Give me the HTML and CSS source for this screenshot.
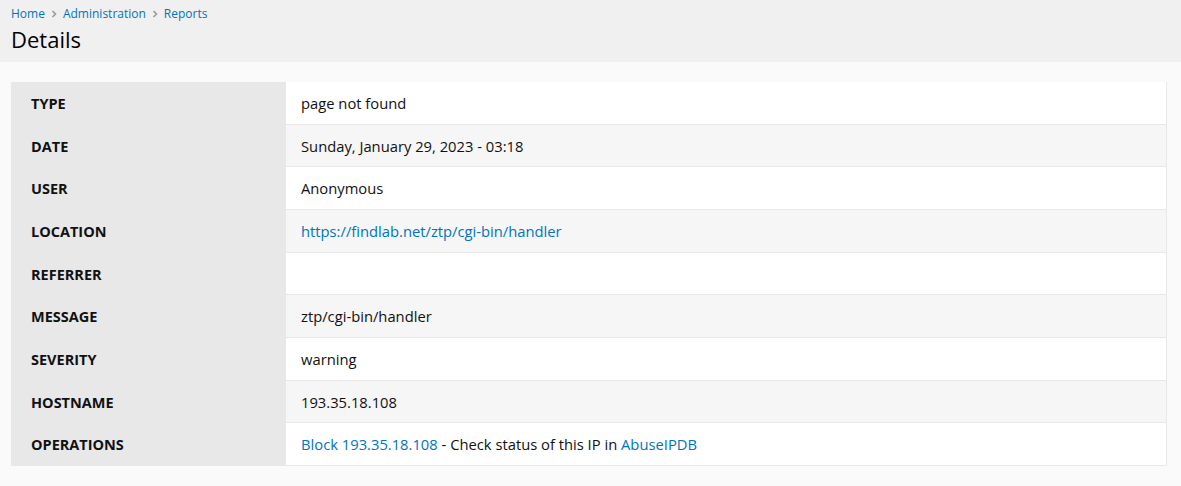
FILE: index.html
```html
<!DOCTYPE html>
<html>
<head>
<meta charset="utf-8">
<link rel="stylesheet" href="styles.css">
</head>
<body>
<header class="page-header">
  <nav class="breadcrumb">
    <a href="#">Home</a>
    <svg class="sep" viewBox="0 0 6 8" width="6" height="8"><path d="M1.5 1l3 3-3 3" fill="none" stroke="#999" stroke-width="1.6"/></svg>
    <a href="#">Administration</a>
    <svg class="sep" viewBox="0 0 6 8" width="6" height="8"><path d="M1.5 1l3 3-3 3" fill="none" stroke="#999" stroke-width="1.6"/></svg>
    <a href="#">Reports</a>
  </nav>
  <h1 class="title">Details</h1>
</header>
<main class="content">
  <table class="details">
    <tbody>
      <tr><th>Type</th><td>page not found</td></tr>
      <tr><th>Date</th><td>Sunday, January 29, 2023 - 03:18</td></tr>
      <tr><th>User</th><td>Anonymous</td></tr>
      <tr><th>Location</th><td><a href="#">https://findlab.net/ztp/cgi-bin/handler</a></td></tr>
      <tr><th>Referrer</th><td></td></tr>
      <tr><th>Message</th><td>ztp/cgi-bin/handler</td></tr>
      <tr><th>Severity</th><td>warning</td></tr>
      <tr><th>Hostname</th><td>193.35.18.108</td></tr>
      <tr><th>Operations</th><td><a href="#">Block 193.35.18.108</a> - Check status of this IP in <a href="#">AbuseIPDB</a></td></tr>
    </tbody>
  </table>
</main>
</body>
</html>
```
FILE: styles.css
```css
html, body {
  margin: 0;
  padding: 0;
  background: #fafafa;
  font-family: "Open Sans", "DejaVu Sans", sans-serif;
  color: #222;
}
a {
  color: #0074bd;
  text-decoration: none;
}
.page-header {
  background: #f0f0f0;
  height: 62px;
  box-sizing: border-box;
  padding: 5px 11px 0;
}
.breadcrumb {
  display: flex;
  align-items: center;
  gap: 6px;
  font-size: 12px;
  line-height: 17px;
}
.sep {
  display: block;
  margin-top: 1px;
}
.title {
  margin: 2px 0 0;
  font-size: 22px;
  font-weight: 400;
  line-height: 30px;
  color: #000;
}
.content {
  padding: 20px 14px 0 11px;
}
.details {
  width: 100%;
  border-collapse: collapse;
  font-size: 14.75px;
  line-height: 21.67px;
  border-right: 1px solid #e8e8e8;
  border-bottom: 1px solid #e8e8e8;
}
.details tr {
  border-top: 1px solid #e8e8e8;
}
.details tr:first-child {
  border-top: 0;
}
.details th {
  width: 255px;
  background: #e8e8e8;
  text-align: left;
  text-transform: uppercase;
  font-weight: 700;
  font-size: 14.5px;
  padding: 11px 0 9px 20px;
  color: #111;
}
.details td {
  padding: 11px 15px 9px;
  background: #fff;
  color: #111;
}
.details tr:nth-child(even) td {
  background: #f6f6f6;
}
```
